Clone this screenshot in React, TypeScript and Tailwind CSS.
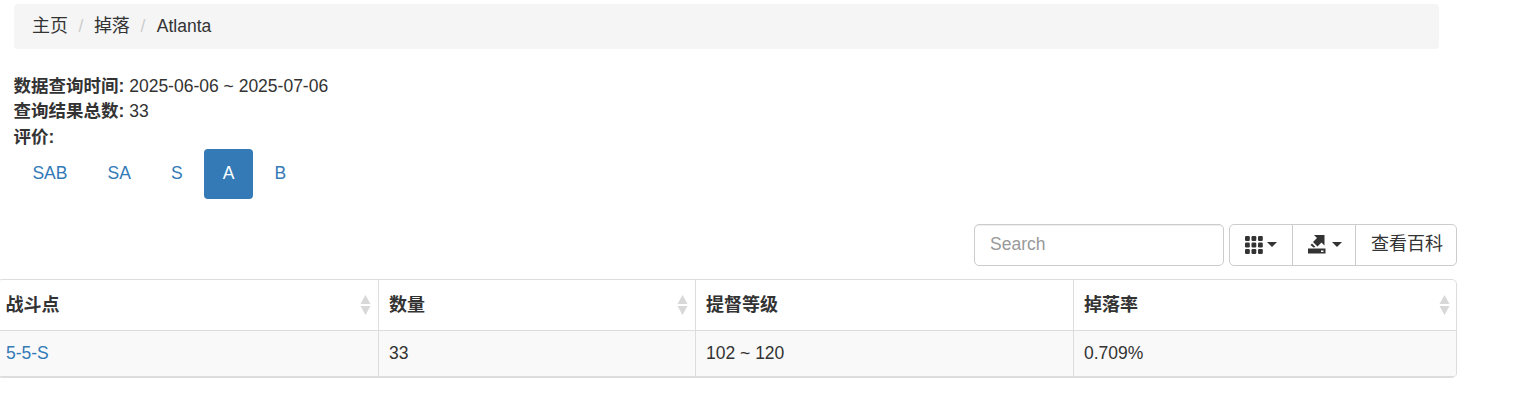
const font = "font-['Liberation_Sans','Noto_Sans_CJK_SC',sans-serif]";

function Sort() {
  return (
    <svg width="11" height="20" viewBox="0 0 11 20" className="shrink-0 mt-[1px]">
      <path d="M5.5 0L10.5 9H0.5Z" fill="#d8d8d8" />
      <path d="M5.5 20L10.5 11H0.5Z" fill="#d8d8d8" />
    </svg>
  );
}

function Caret() {
  return <span className="inline-block w-0 h-0 border-x-[5px] border-x-transparent border-t-[5px] border-t-[#333]" />;
}

function ThIcon() {
  const cells = [0, 6.5, 13];
  return (
    <svg width="18" height="18" viewBox="0 0 18 18" fill="#333">
      {cells.map((y) =>
        cells.map((x) => <rect key={`${x}-${y}`} x={x} y={y} width="4.8" height="5" rx="1.2" />)
      )}
    </svg>
  );
}

function ExportIcon() {
  return (
    <svg width="18" height="19" viewBox="0 0 18 19" fill="#333">
      <path d="M6 0H16.5V10.5L13.5 7.5L9.5 11.5L5 7L9 3Z" />
      <path d="M2.5 10L4 8.5L7.5 12L5.5 12.5Z" />
      <path d="M0 13.5H17.5V18.5H0Z" />
      <rect x="13" y="15.5" width="2.5" height="1.5" fill="#fff" />
    </svg>
  );
}

function HeaderCell({ title, className, sort = true }: { title: string; className: string; sort?: boolean }) {
  return (
    <div className={`flex items-center justify-between h-[50px] font-bold ${className}`}>
      <span className="text-[18px] pt-[3px]">{title}</span>
      {sort && <Sort />}
    </div>
  );
}

export default function App() {
  const pills = ["SAB", "SA", "S", "A", "B"];
  return (
    <div className={`${font} w-[1516px] h-[406px] overflow-hidden bg-white text-[17.5px] leading-[25.5px] text-[#333]`}>
      <div className="pt-1 pl-[14px]">
        <div className="w-[1425px] h-[45px] bg-[#f5f5f5] rounded flex items-center pl-[18px]">
          <span className="text-[18px]">主页</span>
          <span className="text-[#ccc] px-[10.5px]">/</span>
          <span className="text-[18px]">掉落</span>
          <span className="text-[#ccc] pl-[10.5px] pr-[11.5px]">/</span>
          <span>Atlanta</span>
        </div>

        <div className="mt-[24px] pt-[0.5px] -ml-[0.5px]">
          <div><b>数据查询时间:</b> 2025-06-06 ~ 2025-07-06</div>
          <div><b>查询结果总数:</b> 33</div>
          <div><b>评价:</b></div>
        </div>

        <div className="flex gap-[3.3px] -mt-[1.5px]">
          {pills.map((p) => (
            <span
              key={p}
              className={`h-[50px] px-[18.4px] rounded flex items-center ${p === "A" ? "bg-[#337ab7] text-white" : "text-[#337ab7]"}`}
            >
              {p}
            </span>
          ))}
        </div>
      </div>

      <div className="w-[1457px] flex justify-end mt-[25px] h-[42px]">
        <div className="w-[250px] h-[42px] border border-[#ccc] rounded-[5px] flex items-center pl-[15px] text-[#999] shadow-[inset_0_1px_1px_rgba(0,0,0,0.075)]">
          Search
        </div>
        <div className="ml-[5px] w-[228px] h-[42px] border border-[#ccc] rounded-[5px] flex">
          <div className="w-[63px] border-r border-[#ccc] flex items-center gap-[4px] pl-[15px]">
            <ThIcon />
            <Caret />
          </div>
          <div className="w-[63px] border-r border-[#ccc] flex items-center gap-[6px] pl-[15px] pb-[1px]">
            <ExportIcon />
            <Caret />
          </div>
          <div className="flex-1 flex items-center pl-[15px] text-[18px]">查看百科</div>
        </div>
      </div>

      <div className="-ml-[3px] w-[1460px] mt-[13px] border border-[#ddd] rounded-[5px] overflow-hidden">
        <div className="grid grid-cols-[381px_317px_378px_1fr] border-b border-[#ddd]">
          <HeaderCell title="战斗点" className="border-r border-[#ddd] pl-[7.5px] pr-[7px]" />
          <HeaderCell title="数量" className="border-r border-[#ddd] pl-[10px] pr-[7px]" />
          <HeaderCell title="提督等级" className="border-r border-[#ddd] pl-[10px] pr-[7px]" sort={false} />
          <HeaderCell title="掉落率" className="pl-[10px] pr-[6px]" />
        </div>
        <div className="grid grid-cols-[381px_317px_378px_1fr] bg-[#f9f9f9] border-b border-[#ddd]">
          <div className="h-[45px] flex items-center pl-2 pt-[2px] border-r border-[#ddd] text-[#337ab7]">5-5-S</div>
          <div className="h-[45px] flex items-center pl-[10px] pt-[2px] border-r border-[#ddd]">33</div>
          <div className="h-[45px] flex items-center pl-[10px] pt-[2px] border-r border-[#ddd]">102 ~ 120</div>
          <div className="h-[45px] flex items-center pl-[10px] pt-[2px]">0.709%</div>
        </div>
      </div>
    </div>
  );
}
